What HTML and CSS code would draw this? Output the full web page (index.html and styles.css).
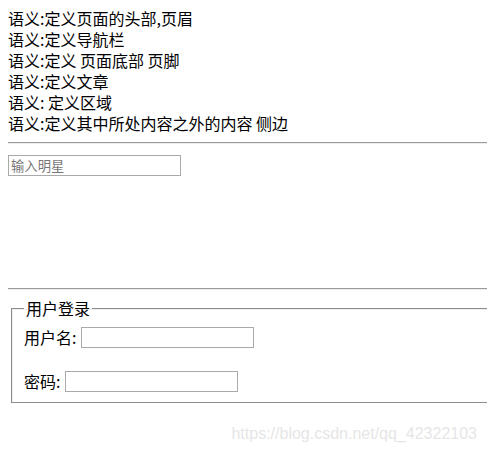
FILE: index.html
```html
<!DOCTYPE html>
<html lang="zh">
<head>
<meta charset="utf-8">
<title>语义标签</title>
<link rel="stylesheet" href="styles.css">
</head>
<body>
<div class="lines">
  <div>语义:定义页面的头部,页眉</div>
  <div>语义:定义导航栏</div>
  <div>语义:定义 页面底部 页脚</div>
  <div>语义:定义文章</div>
  <div>语义: 定义区域</div>
  <div>语义:定义其中所处内容之外的内容 侧边</div>
</div>
<hr class="rule">
<div class="search">
  <input class="field" type="text" placeholder="输入明星">
</div>
<hr class="rule">
<form class="login">
  <fieldset class="box">
    <legend class="legend">用户登录</legend>
    <div class="row first"><label>用户名:</label><input class="field" type="text"></div>
    <div class="row second"><label>密码:</label><input class="field" type="password"></div>
  </fieldset>
</form>
<div class="watermark">https://blog.csdn.net/qq_42322103</div>
</body>
</html>
```
FILE: styles.css
```css
html {
  overflow: hidden;
}
body {
  margin: 8px;
  width: 700px;
  font-family: "Noto Sans CJK SC", "Noto Sans", sans-serif;
  font-size: 16px;
  line-height: 21px;
  color: #000;
  background: #fff;
}
.lines div {
  height: 21px;
  white-space: nowrap;
}
.rule {
  margin: 8px 0;
  border: 0;
  border-top: 1px solid #9a9a9a;
  border-bottom: 1px solid #eeeeee;
  height: 0;
}
.search {
  padding-top: 2px;
  height: 126px;
}
.field {
  box-sizing: border-box;
  width: 173px;
  height: 21px;
  margin: 0;
  padding: 1px 2px;
  border: 1px solid #a9a9a9;
  font-family: "Noto Sans CJK SC", sans-serif;
  font-size: 13.33px;
  line-height: 17px;
  background: #fff;
}
.field::placeholder {
  color: #777;
}
.login {
  margin: 0;
}
.box {
  margin: 0 3px;
  padding: 0 12px 10px;
  border: 1px solid #8c8c8c;
  box-shadow: inset 1px 1px 0 #eeeeee;
}
.legend {
  padding: 0 2px;
  line-height: 21px;
}
.row {
  display: flex;
  align-items: center;
  height: 21px;
}
.row label {
  margin-right: 5px;
}
.first {
  margin-top: 8px;
}
.second {
  margin-top: 23px;
}
.watermark {
  position: absolute;
  top: 425px;
  right: 10px;
  font-family: "Liberation Sans", Arial, sans-serif;
  font-size: 16px;
  line-height: 18px;
  color: #e6e6e6;
  white-space: nowrap;
}
```
